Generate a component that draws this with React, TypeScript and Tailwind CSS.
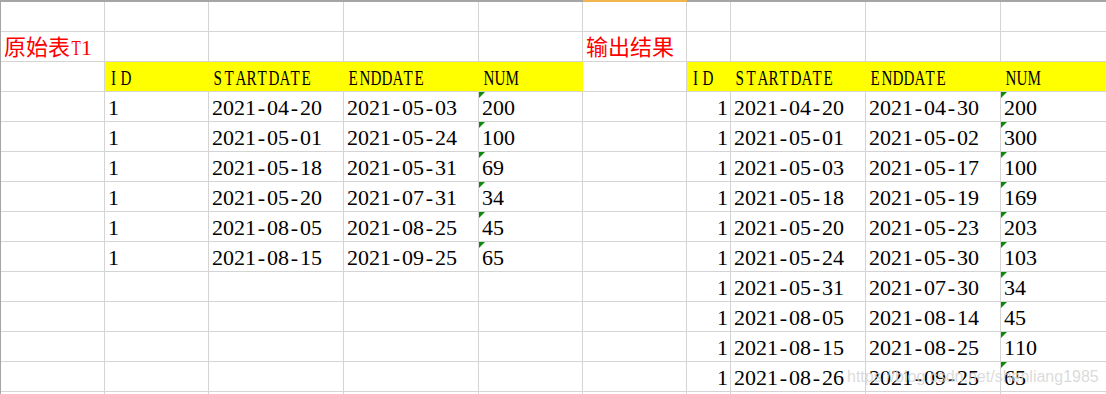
import React from "react";

type Cell = {
  text?: string;
  right?: boolean;
  yellow?: boolean;
  tri?: boolean;
  red?: boolean;
  noRight?: boolean;
};

const widths = [104, 104, 135, 135, 104, 104, 44, 135, 135, 0];

const left = [
  ["1", "2021-04-20", "2021-05-03", "200"],
  ["1", "2021-05-01", "2021-05-24", "100"],
  ["1", "2021-05-18", "2021-05-31", "69"],
  ["1", "2021-05-20", "2021-07-31", "34"],
  ["1", "2021-08-05", "2021-08-25", "45"],
  ["1", "2021-08-15", "2021-09-25", "65"],
];

const right = [
  ["1", "2021-04-20", "2021-04-30", "200"],
  ["1", "2021-05-01", "2021-05-02", "300"],
  ["1", "2021-05-03", "2021-05-17", "100"],
  ["1", "2021-05-18", "2021-05-19", "169"],
  ["1", "2021-05-20", "2021-05-23", "203"],
  ["1", "2021-05-24", "2021-05-30", "103"],
  ["1", "2021-05-31", "2021-07-30", "34"],
  ["1", "2021-08-05", "2021-08-14", "45"],
  ["1", "2021-08-15", "2021-08-25", "110"],
  ["1", "2021-08-26", "2021-09-25", "65"],
];

function buildRows(): Cell[][] {
  const rows: Cell[][] = [];
  const blank = (): Cell[] => widths.map(() => ({}));
  rows.push(blank());
  const title = blank();
  title[0] = { text: "原始表T1", red: true };
  title[5] = { text: "输出结果", red: true };
  rows.push(title);
  const header = blank();
  const hdr = ["ID", "STARTDATE", "ENDDATE", "NUM"];
  hdr.forEach((h, i) => {
    header[1 + i] = { text: h, yellow: true, noRight: true };
    header[6 + i] = { text: h, yellow: true, noRight: i < 3 };
  });
  rows.push(header);
  for (let r = 0; r < 11; r++) {
    const row = blank();
    const l = left[r];
    if (l) {
      row[1] = { text: l[0] };
      row[2] = { text: l[1] };
      row[3] = { text: l[2] };
      row[4] = { text: l[3], tri: true };
    }
    const rr = right[r];
    if (rr) {
      row[6] = { text: rr[0], right: true };
      row[7] = { text: rr[1] };
      row[8] = { text: rr[2] };
      row[9] = { text: rr[3], tri: true };
    }
    rows.push(row);
  }
  return rows;
}

function Chars({ text }: { text: string }) {
  return (
    <>
      {Array.from(text).map((ch, i) => {
        const code = ch.charCodeAt(0);
        const cjk = code > 0x2e80;
        const upper = code >= 65 && code <= 90;
        const cls = cjk
          ? "inline-block w-[22px] text-center"
          : upper
          ? "inline-block w-[11px] text-center scale-x-[0.72] text-[21px]"
          : "inline-block w-[11px] text-center";
        return (
          <span key={i} className={cls}>
            {ch}
          </span>
        );
      })}
    </>
  );
}

export default function App() {
  const rows = buildRows();
  return (
    <div
      className="relative w-[1106px] h-[394px] overflow-hidden bg-white text-black"
      style={{ fontFamily: '"Liberation Serif", "Noto Sans CJK SC", serif' }}
    >
      <div className="flex h-[2px]">
        <div className="w-[583px] bg-[#a5a5a5]" />
        <div className="w-[104px] bg-[#f2b54d]" />
        <div className="flex-1 bg-[#a5a5a5]" />
      </div>
      <div className="border-l border-[#a5a5a5]">
        {rows.map((row, ri) => (
          <div key={ri} className="flex h-[30px]">
            {row.map((c, ci) => {
              const w = widths[ci];
              const cls = [
                "relative box-border h-[30px] border-b border-[#d4d4d4] whitespace-nowrap overflow-visible text-[22px] leading-[27px] pt-[2px]",
                ci === 9 ? "flex-1" : "border-r",
                c.yellow ? "bg-[#ffff00]" : "",
                c.yellow && c.noRight ? "border-r-[#ffff00]" : "border-r-[#d4d4d4]",
                c.right ? "text-right pr-[2px]" : "pl-[3px]",
                c.red ? "text-[#ff0000] pl-[2px] z-10" : "",
              ].join(" ");
              return (
                <div
                  key={ci}
                  className={cls}
                  style={ci === 9 ? undefined : { width: w, minWidth: w }}
                >
                  {c.tri && (
                    <svg
                      className="absolute left-0 top-0"
                      width="6"
                      height="6"
                      viewBox="0 0 6 6"
                    >
                      <polygon points="0,0 6,0 0,6" fill="#0b8a0b" />
                    </svg>
                  )}
                  {c.text && <Chars text={c.text} />}
                </div>
              );
            })}
          </div>
        ))}
      </div>
      <div
        className="absolute left-[847px] top-[365px] text-[16px] text-[#d2d2d2]/80 whitespace-nowrap"
        style={{ fontFamily: '"Liberation Sans", Arial, sans-serif' }}
      >
        https://blog.csdn.net/shenliang1985
      </div>
    </div>
  );
}
